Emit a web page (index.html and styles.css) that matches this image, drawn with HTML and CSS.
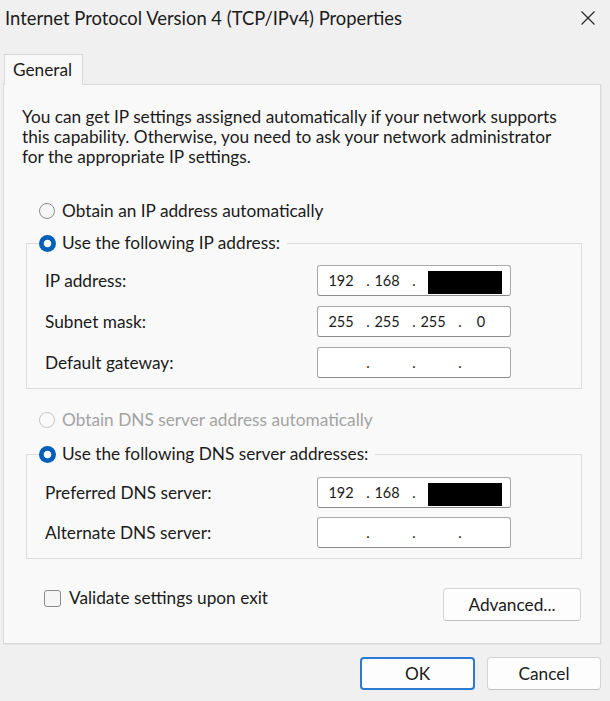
FILE: index.html
```html
<!DOCTYPE html>
<html lang="en">
<head>
<meta charset="utf-8">
<title>Internet Protocol Version 4 (TCP/IPv4) Properties</title>
<link rel="stylesheet" href="styles.css">
</head>
<body>
<div class="window">
  <header class="titlebar">
    <span class="title">Internet Protocol Version 4 (TCP/IPv4) Properties</span>
    <svg class="close" viewBox="0 0 16 16" aria-label="Close"><path d="M1.5 1.5 L14.5 14.5 M14.5 1.5 L1.5 14.5" stroke="#262626" stroke-width="1.2" fill="none"/></svg>
  </header>
  <nav class="tabs"><div class="tab">General</div></nav>
  <main class="panel">
    <p class="desc">You can get IP settings assigned automatically if your network supports<br>this capability. Otherwise, you need to ask your network administrator<br>for the appropriate IP settings.</p>

    <div class="radio-row first"><span class="radio"></span><span>Obtain an IP address automatically</span></div>

    <fieldset class="group ip-group">
      <legend><span class="legend-inner"><span class="radio checked"></span><span>Use the following IP address:</span></span></legend>
      <div class="rows">
        <div class="field-row">
          <span class="label">IP address:</span>
          <div class="ipfield"><span class="oct">192</span><span class="dot">.</span><span class="oct">168</span><span class="dot">.</span><span class="redact"></span></div>
        </div>
        <div class="field-row">
          <span class="label">Subnet mask:</span>
          <div class="ipfield"><span class="oct">255</span><span class="dot">.</span><span class="oct">255</span><span class="dot">.</span><span class="oct">255</span><span class="dot">.</span><span class="oct">0</span></div>
        </div>
        <div class="field-row">
          <span class="label">Default gateway:</span>
          <div class="ipfield"><span class="oct"></span><span class="dot">.</span><span class="oct"></span><span class="dot">.</span><span class="oct"></span><span class="dot">.</span><span class="oct"></span></div>
        </div>
      </div>
    </fieldset>

    <div class="radio-row disabled"><span class="radio"></span><span>Obtain DNS server address automatically</span></div>

    <fieldset class="group dns-group">
      <legend><span class="legend-inner"><span class="radio checked"></span><span>Use the following DNS server addresses:</span></span></legend>
      <div class="rows">
        <div class="field-row">
          <span class="label">Preferred DNS server:</span>
          <div class="ipfield"><span class="oct">192</span><span class="dot">.</span><span class="oct">168</span><span class="dot">.</span><span class="redact"></span></div>
        </div>
        <div class="field-row">
          <span class="label">Alternate DNS server:</span>
          <div class="ipfield"><span class="oct"></span><span class="dot">.</span><span class="oct"></span><span class="dot">.</span><span class="oct"></span><span class="dot">.</span><span class="oct"></span></div>
        </div>
      </div>
    </fieldset>

    <div class="bottom-row">
      <div class="check-row"><span class="checkbox"></span><span>Validate settings upon exit</span></div>
      <button class="btn advanced">Advanced...</button>
    </div>
  </main>
  <footer class="footer">
    <button class="btn ok">OK</button>
    <button class="btn cancel">Cancel</button>
  </footer>
</div>
</body>
</html>
```
FILE: styles.css
```css
* { box-sizing: border-box; }
html, body { margin: 0; padding: 0; }
body {
  width: 610px;
  height: 701px;
  overflow: hidden;
  background: #f0f0f0;
  font-family: Lato, "Open Sans", sans-serif;
  font-size: 17.25px;
  line-height: 20px;
  color: #1b1b1b;
}
.titlebar {
  height: 35px;
  display: flex;
  align-items: center;
  justify-content: space-between;
  padding: 0 14px 0 5px;
}
.title { font-size: 18.4px; line-height: 20px; }
.close { width: 16px; height: 16px; display: block; }

.tabs { display: flex; padding: 19px 0 0 4px; }
.tab {
  position: relative;
  z-index: 1;
  width: 79px;
  height: 31px;
  margin-bottom: -1px;
  padding-left: 8px;
  line-height: 29px;
  background: #f9f9f9;
  border: 1px solid #d9d9d9;
  border-bottom: none;
}

.panel {
  margin: 0 9px 0 3px;
  background: #f9f9f9;
  border: 1px solid #d9d9d9;
  box-shadow: 1px 1px 0 #e6e6e6;
  padding: 22px 18px 22px 18px;
}
.desc { margin: 0; line-height: 20px; }

.radio-row {
  display: flex;
  align-items: center;
  gap: 7px;
  height: 20px;
  padding-left: 17px;
}
.radio-row.first { margin-top: 34px; }
.radio-row.disabled { margin-top: 21px; color: #a3a3a3; }

.radio {
  flex: none;
  display: inline-block;
  width: 16px;
  height: 16px;
  border-radius: 50%;
  border: 1px solid #8b8b8b;
  background: #f6f6f6;
}
.radio-row.disabled .radio { border-color: #c8c8c8; background: #f9f9f9; }
.radio.checked {
  border: none;
  background: radial-gradient(circle, #ffffff 0 3.4px, #005fb8 4.2px);
  width: 17px;
  height: 17px;
}

.group {
  margin: 12px 0 0 4px;
  border: 1px solid #dcdcdc;
  padding: 12px 0 10px 12px;
  min-width: 0;
}
.dns-group { margin-top: 14px; padding-top: 13px; }
legend { padding: 0 7px 0 0; line-height: 20px; }
.legend-inner {
  display: inline-flex;
  align-items: center;
  gap: 6px;
  height: 20px;
  line-height: 20px;
  vertical-align: top;
}

.rows { display: flex; flex-direction: column; gap: 10px; }
.dns-group .rows { gap: 9px; }
.field-row {
  display: grid;
  grid-template-columns: 272px 194px;
  align-items: center;
  padding-left: 6px;
}
.label { line-height: 20px; }
.ipfield {
  height: 31px;
  display: flex;
  align-items: center;
  padding-left: 8px;
  background: #ffffff;
  border: 1px solid #a9a9a9;
  border-bottom-color: #8c8c8c;
  border-radius: 3px;
  font-size: 14.5px;
}
.oct { width: 30px; text-align: center; }
.oct:last-child { width: 34px; }
.dot { width: 16px; text-align: center; padding-left: 8px; }
.redact {
  width: 74px;
  height: 23px;
  margin: 3px 0 0 10px;
  background: #000;
}

.bottom-row {
  margin-top: 29px;
  display: flex;
  justify-content: space-between;
  align-items: flex-start;
}
.check-row {
  display: flex;
  align-items: center;
  gap: 8px;
  height: 20px;
  padding-left: 22px;
}
.checkbox {
  width: 17px;
  height: 17px;
  border: 1px solid #8b8b8b;
  border-radius: 3px;
  background: #f6f6f6;
}

.btn {
  font: inherit;
  color: #1b1b1b;
  height: 33px;
  background: #fdfdfd;
  border: 1px solid #d4d4d4;
  border-bottom-color: #c2c2c2;
  border-radius: 4px;
  padding: 0;
}
.advanced { width: 138px; margin-right: 1px; }

.footer {
  display: flex;
  justify-content: flex-end;
  gap: 12px;
  padding: 13px 9px 0 0;
}
.ok { width: 115px; border: 2px solid #2c7bd0; }
.cancel { width: 114px; }
```
